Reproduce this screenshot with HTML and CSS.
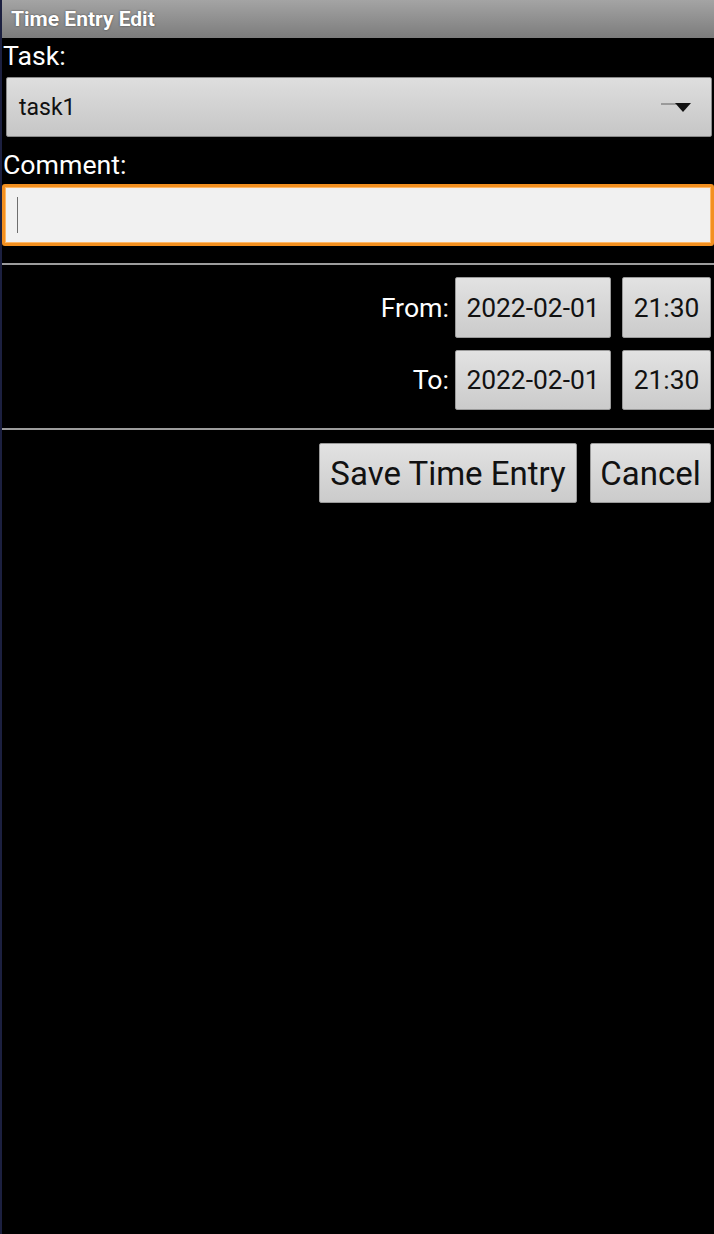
FILE: index.html
```html
<!DOCTYPE html>
<html>
<head>
<meta charset="utf-8">
<title>Time Entry Edit</title>
<link rel="stylesheet" href="styles.css">
</head>
<body>
<div class="screen">
  <div class="titlebar">Time Entry Edit</div>
  <div class="label label-task">Task:</div>
  <div class="spinner">
    <span class="spinner-text">task1</span>
    <svg class="spinner-arrow" width="32" height="12" viewBox="0 0 32 12">
      <rect x="0" y="1" width="15" height="2" fill="#9a9a9a"/>
      <polygon points="14,1 30,1 22,10" fill="#111"/>
    </svg>
  </div>
  <div class="label label-comment">Comment:</div>
  <div class="textfield"><span class="cursor"></span></div>
  <div class="divider div1"></div>
  <div class="row row-from">
    <span class="row-label">From:</span>
    <button class="btn btn-date">2022-02-01</button>
    <button class="btn btn-time">21:30</button>
  </div>
  <div class="row row-to">
    <span class="row-label">To:</span>
    <button class="btn btn-date">2022-02-01</button>
    <button class="btn btn-time">21:30</button>
  </div>
  <div class="divider div2"></div>
  <div class="row row-actions">
    <button class="btn btn-save">Save Time Entry</button>
    <button class="btn btn-cancel">Cancel</button>
  </div>
</div>
</body>
</html>
```
FILE: styles.css
```css
html, body {
  margin: 0;
  padding: 0;
  background: #000;
}
body {
  width: 714px;
  height: 1234px;
  overflow: hidden;
  font-family: Roboto, "Noto Sans", sans-serif;
}
.screen {
  box-sizing: border-box;
  height: 1234px;
  border-left: 2px solid #1c2040;
  display: flex;
  flex-direction: column;
}
.titlebar {
  height: 38px;
  flex: none;
  box-sizing: border-box;
  padding-left: 9px;
  line-height: 38px;
  font-size: 21px;
  font-weight: bold;
  color: #fff;
  text-shadow: 0 0 2px rgba(0,0,0,0.6);
  background: linear-gradient(#a4a4a4, #7c7c7c);
}
.label {
  color: #fff;
  font-size: 26.7px;
  line-height: 28px;
  padding-left: 1px;
}
.label-task {
  margin-top: 4px;
}
.spinner {
  margin: 7px 2px 0 4px;
  height: 60px;
  box-sizing: border-box;
  border: 1px solid #8a8a8a;
  border-radius: 2px;
  background: linear-gradient(#dedede, #c6c6c6);
  display: flex;
  align-items: center;
  justify-content: space-between;
  padding: 0 18px 0 12px;
}
.spinner-text {
  font-size: 23px;
  color: #111;
}
.spinner-arrow {
  margin-top: 2px;
}
.label-comment {
  margin-top: 14px;
}
.textfield {
  margin-top: 5px;
  height: 62px;
  box-sizing: border-box;
  border: 3px solid #f39020;
  border-radius: 3px;
  box-shadow: inset 0 0 0 1px #ffb866;
  background: #f1f1f1;
  display: flex;
  align-items: center;
  padding-left: 12px;
}
.cursor {
  width: 1px;
  height: 36px;
  background: #6e6e6e;
}
.divider {
  height: 2px;
  background: #9c9c9c;
}
.div1 {
  margin-top: 17px;
}
.row {
  display: flex;
  justify-content: flex-end;
  align-items: center;
  padding-right: 3px;
}
.row-from {
  margin-top: 12px;
}
.row-to {
  margin-top: 12px;
}
.row-label {
  color: #fff;
  font-size: 26.7px;
  margin-right: 6px;
}
.btn {
  font-family: Roboto, "Noto Sans", sans-serif;
  color: #111;
  font-size: 26.4px;
  height: 61px;
  box-sizing: border-box;
  border: 1px solid #9a9a9a;
  border-radius: 2px;
  background: linear-gradient(#e2e2e2, #cbcbcb);
  padding: 0;
  margin: 0;
}
.btn-date {
  width: 156px;
}
.btn-time {
  width: 89px;
  margin-left: 11px;
}
.row-to .btn {
  height: 60px;
}
.div2 {
  margin-top: 18px;
}
.row-actions {
  margin-top: 13px;
}
.btn-save {
  width: 258px;
  height: 60px;
  font-size: 33px;
}
.btn-cancel {
  width: 121px;
  height: 60px;
  font-size: 33px;
  margin-left: 13px;
}
```
